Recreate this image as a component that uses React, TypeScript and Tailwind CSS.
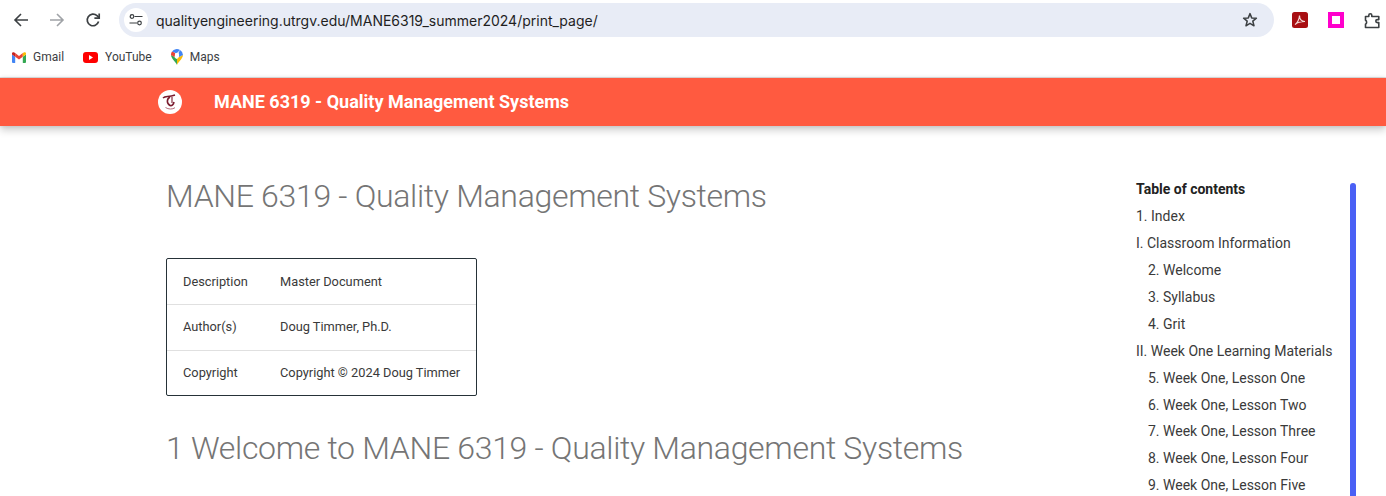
const toc = [
  { label: '1. Index', sub: false },
  { label: 'I. Classroom Information', sub: false },
  { label: '2. Welcome', sub: true },
  { label: '3. Syllabus', sub: true },
  { label: '4. Grit', sub: true },
  { label: 'II. Week One Learning Materials', sub: false },
  { label: '5. Week One, Lesson One', sub: true },
  { label: '6. Week One, Lesson Two', sub: true },
  { label: '7. Week One, Lesson Three', sub: true },
  { label: '8. Week One, Lesson Four', sub: true },
  { label: '9. Week One, Lesson Five', sub: true },
]

const rows = [
  ['Description', 'Master Document'],
  ['Author(s)', 'Doug Timmer, Ph.D.'],
  ['Copyright', 'Copyright © 2024 Doug Timmer'],
]

function ArrowIcon({ flip, color }: { flip?: boolean; color: string }) {
  return (
    <svg width="16" height="16" viewBox="0 0 16 16" fill="none" stroke={color} strokeWidth="1.6" className={flip ? 'rotate-180' : ''}>
      <path d="M15 8H2M8 2 2 8l6 6" />
    </svg>
  )
}

function ReloadIcon() {
  return (
    <svg width="16" height="16" viewBox="0 0 16 16" fill="none" stroke="#3c4043" strokeWidth="1.7">
      <path d="M13.6 9.6A5.8 5.8 0 1 1 12 3.7L14 5.6" />
      <path d="M14.2 1.4v4.8H9.4" fill="none" />
    </svg>
  )
}

function TuneIcon() {
  return (
    <svg width="14" height="12" viewBox="0 0 14 12" fill="none" stroke="#3c4043" strokeWidth="1.2">
      <circle cx="3" cy="2.5" r="1.8" />
      <path d="M5.5 2.5H13.5M.5 9H8" />
      <circle cx="10.5" cy="9" r="1.8" />
    </svg>
  )
}

function GmailIcon() {
  return (
    <svg width="14" height="11" viewBox="0 0 14 11">
      <path d="M0 2.5 3.2 4.8V11H1a1 1 0 0 1-1-1z" fill="#4285f4" />
      <path d="M14 2.5 10.8 4.8V11H13a1 1 0 0 0 1-1z" fill="#34a853" />
      <path d="M3.2 1 7 3.9 10.8 1V4.8L7 7.6 3.2 4.8z" fill="#ea4335" />
      <path d="M0 1.5C0 .4 1.3-.2 2.2.4L3.2 1V4.8L0 2.5z" fill="#c5221f" />
      <path d="M14 1.5C14 .4 12.7-.2 11.8.4L10.8 1V4.8L14 2.5z" fill="#fbbc04" />
    </svg>
  )
}

function YoutubeIcon() {
  return (
    <svg width="15" height="11" viewBox="0 0 15 11">
      <rect width="15" height="11" rx="3" fill="#f00" />
      <path d="M6 3v5l4-2.5z" fill="#fff" />
    </svg>
  )
}

function MapsIcon() {
  return (
    <svg width="12" height="16" viewBox="0 0 12 16">
      <path d="M6 16C5 13 0 9.5 0 6L3 7.5C4 9 5 10 6 10z" fill="#34a853" />
      <path d="M6 16c1-3 6-6.5 6-10L8 8 6 10z" fill="#fbbc04" />
      <path d="M1 2.5A6 6 0 0 0 0 6l3.5 2L4.5 4z" fill="#ea4335" />
      <path d="M1 2.5A6 6 0 0 1 9 1L6 4 4.5 4z" fill="#4285f4" />
      <path d="M9 1a6 6 0 0 1 3 5L8 8 7.5 4z" fill="#4285f4" />
      <circle cx="6" cy="6" r="2.2" fill="#fff" />
    </svg>
  )
}

function StarIcon() {
  return (
    <svg width="16" height="16" viewBox="0 0 16 16" fill="none" stroke="#3c4043" strokeWidth="1.5" strokeLinejoin="round">
      <path d="M8 1.6 9.7 5.9l4.7.3-3.6 3 1.2 4.6L8 11.3l-4 2.5 1.2-4.6-3.6-3 4.7-.3z" />
    </svg>
  )
}

function PdfIcon() {
  return (
    <svg width="16" height="16" viewBox="0 0 16 16">
      <rect width="16" height="16" rx="2.5" fill="#a80f12" />
      <path d="M3 12.5C5 11.5 7.5 7 7.5 3.5 7.5 7 9.5 9.5 13 9.5 10 9.5 6 10 3 12.5z" fill="none" stroke="#f3d9d6" strokeWidth="1.2" />
    </svg>
  )
}

function PuzzleIcon() {
  return (
    <svg width="17" height="17" viewBox="0 0 17 17" fill="none" stroke="#3c4043" strokeWidth="1.6" strokeLinejoin="round">
      <path d="M1.5 4.5H4.8V3.2a1.5 1.5 0 0 1 3 0V4.5H14.8V7.6H13.3a1.5 1.5 0 0 0 0 3H14.8V15.5H1.5V12.3C3 11.5 3 9 1.5 8.3z" />
    </svg>
  )
}

function SiteLogo() {
  return (
    <div className="flex h-6 w-6 items-center justify-center rounded-full bg-white">
      <svg width="20" height="20" viewBox="0 0 20 20" fill="none" stroke="#7a1b2e">
        <path d="M3 6C5.5 3.500 8 5.500 15 3" strokeWidth="1.5" />
        <path d="M10 5C6.5 7 6.5 11.5 10 13.5 12 14 13.5 12.5 14 10" strokeWidth="1.6" />
        <path d="M12 5v6" strokeWidth="1.1" />
        <path d="M5.5 15.5c3 2 7 2 9.5 .2" strokeWidth="1" stroke="#b56a78" />
      </svg>
    </div>
  )
}

function BookmarkItem({ icon, label }: { icon: React.ReactNode; label: string }) {
  return (
    <div className="flex items-center gap-[7px] text-[12px] text-[#3c4043]">
      {icon}
      <span>{label}</span>
    </div>
  )
}

export default function App() {
  return (
    <div className="h-[496px] w-[1386px] overflow-hidden bg-white font-['Roboto',sans-serif]">
      {/* browser chrome */}
      <div className="h-[78px] border-b border-[#e3e3e3] bg-white">
        <div className="flex h-10 items-center">
          <div className="ml-[13px] flex w-[106px] items-center gap-[20px]">
            <ArrowIcon color="#3c4043" />
            <ArrowIcon flip color="#a0a3a7" />
            <ReloadIcon />
          </div>
          <div className="flex h-[34px] w-[1155px] items-center rounded-full bg-[#e8ecf6] pl-[5px] pr-4">
            <div className="flex h-6 w-6 items-center justify-center rounded-full bg-white">
              <TuneIcon />
            </div>
            <span className="ml-[8px] flex-1 font-['Inter',sans-serif] text-[14px] text-[#1f1f1f]">
              qualityengineering.utrgv.edu/MANE6319_summer2024/print_page/
            </span>
            <StarIcon />
          </div>
          <div className="ml-[18px] flex items-center gap-[20px]">
            <PdfIcon />
            <div className="h-4 w-4 border-[4px] border-[#ff00cc] bg-white" />
            <PuzzleIcon />
          </div>
        </div>
        <div className="flex h-[34px] items-center gap-[19px] pl-3">
          <BookmarkItem icon={<GmailIcon />} label="Gmail" />
          <BookmarkItem icon={<YoutubeIcon />} label="YouTube" />
          <BookmarkItem icon={<MapsIcon />} label="Maps" />
        </div>
      </div>

      {/* site header */}
      <header className="relative z-10 flex h-12 items-center bg-[#ff5a40] pl-[158px] shadow-[0_0_4px_rgba(0,0,0,0.1),0_4px_8px_rgba(0,0,0,0.2)]">
        <SiteLogo />
        <span className="mb-[2px] ml-8 text-[18px] font-bold text-white">MANE 6319 - Quality Management Systems</span>
      </header>

      <div className="flex">
        <main className="ml-[166px] w-[970px] pt-[50px]">
          <h1 className="text-[32px] leading-[40px] font-light tracking-[-0.32px] text-[#757575]">MANE 6319 - Quality Management Systems</h1>
          <div className="mt-[42px] flex w-[311px] flex-col rounded-[2px] border border-[#263238] text-[12.8px] text-[#3a3a3a]">
            {rows.map(([k, v], i) => (
              <div key={k} className={`flex h-[45.33px] items-center ${i > 0 ? 'border-t border-[#e0e0e0]' : ''} ${i === 1 ? 'pb-[1px]' : ''}`}>
                <span className="w-[113px] pl-4">{k}</span>
                <span className="whitespace-nowrap">{v}</span>
              </div>
            ))}
          </div>
          <h2 className="mt-[32px] text-[32px] leading-[40px] font-light tracking-[-0.32px] text-[#757575]">1 Welcome to MANE 6319 - Quality Management Systems</h2>
        </main>

        <nav className="relative w-[250px] pt-[50.4px] text-[14px] text-[#3a3a3a]">
          <div className="h-[26.9px] leading-[27px] font-bold text-[#222222]">Table of contents</div>
          {toc.map((t) => (
            <div key={t.label} className={`h-[26.9px] leading-[27px] whitespace-nowrap ${t.sub ? 'pl-3' : ''}`}>
              {t.label}
            </div>
          ))}
          <div className="absolute top-[57px] left-[214px] h-[400px] w-[6px] rounded-t-full bg-[#4a60f5]" />
        </nav>
      </div>
    </div>
  )
}
